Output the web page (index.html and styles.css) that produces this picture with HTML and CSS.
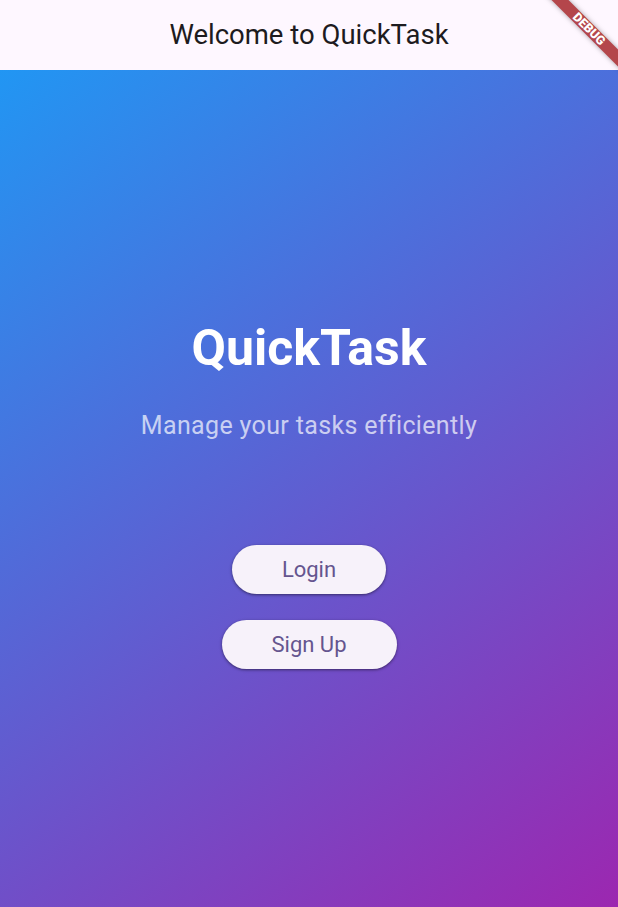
FILE: index.html
```html
<!DOCTYPE html>
<html lang="en">
<head>
<meta charset="utf-8">
<title>QuickTask</title>
<link rel="stylesheet" href="styles.css">
</head>
<body>
<div class="app">
  <header class="appbar">
    <h1 class="appbar-title">Welcome to QuickTask</h1>
  </header>
  <main class="hero">
    <h2 class="hero-title">QuickTask</h2>
    <p class="hero-subtitle">Manage your tasks efficiently</p>
    <div class="actions">
      <button class="pill-btn">Login</button>
      <button class="pill-btn">Sign Up</button>
    </div>
  </main>
  <div class="debug-banner">DEBUG</div>
</div>
</body>
</html>
```

FILE: styles.css
```css
* { box-sizing: border-box; }
html, body {
  margin: 0;
  padding: 0;
  width: 618px;
  height: 907px;
  overflow: hidden;
  font-family: Roboto, "Noto Sans", sans-serif;
}
.app {
  position: relative;
  width: 618px;
  height: 907px;
  display: flex;
  flex-direction: column;
  overflow: hidden;
}
.appbar {
  height: 70px;
  flex: 0 0 70px;
  background: #fef7ff;
  display: flex;
  align-items: center;
  justify-content: center;
}
.appbar-title {
  margin: 0;
  font-size: 27.5px;
  font-weight: 400;
  color: #1d1b20;
  line-height: 34px;
}
.hero {
  flex: 1;
  background: linear-gradient(143.56deg, #2196f3 0%, #9c27b0 100%);
  display: flex;
  flex-direction: column;
  align-items: center;
  padding-top: 249px;
}
.hero-title {
  margin: 0;
  font-size: 50px;
  font-weight: 700;
  color: #ffffff;
  line-height: 59px;
}
.hero-subtitle {
  margin: 33px 0 0;
  font-size: 25px;
  line-height: 29px;
  letter-spacing: 0.35px;
  color: rgba(255, 255, 255, 0.7);
}
.actions {
  margin-top: 105px;
  display: flex;
  flex-direction: column;
  align-items: center;
  gap: 26px;
}
.pill-btn {
  font-family: Roboto, "Noto Sans", sans-serif;
  font-size: 22px;
  line-height: 25px;
  color: #65558f;
  background: #f7f2fa;
  border: none;
  border-radius: 999px;
  padding: 12px 50px;
  height: 49px;
  box-shadow: 0 1px 2px rgba(0, 0, 0, 0.3), 0 1px 3px 1px rgba(0, 0, 0, 0.15);
}
.debug-banner {
  position: absolute;
  left: 528.7px;
  top: 23.3px;
  width: 120px;
  height: 12px;
  transform: rotate(45deg);
  background: #b4464b;
  color: #ffffff;
  font-size: 12.5px;
  font-weight: 900;
  line-height: 12px;
  text-align: center;
  box-shadow: 0 0 5px rgba(0, 0, 0, 0.35);
}
```
